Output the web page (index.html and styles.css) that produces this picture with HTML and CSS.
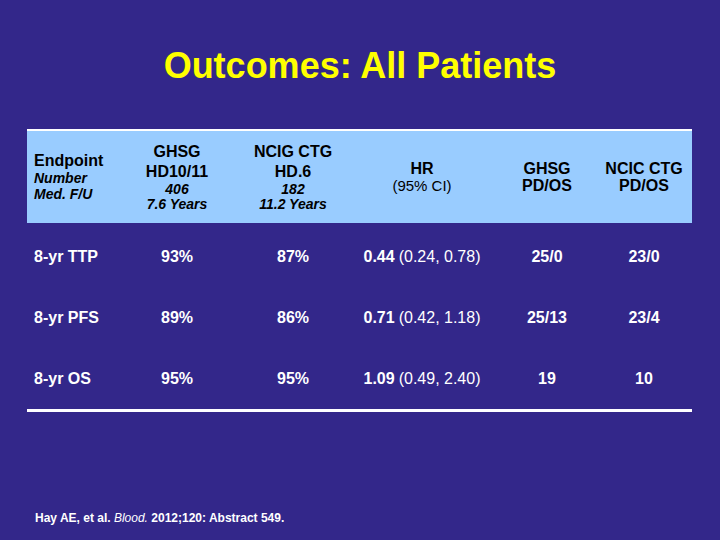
FILE: index.html
```html
<!DOCTYPE html>
<html lang="en">
<head>
<meta charset="utf-8">
<title>Outcomes: All Patients</title>
<link rel="stylesheet" href="styles.css">
</head>
<body>
<div class="slide">
  <h1 class="title">Outcomes: All Patients</h1>
  <div class="table">
    <div class="head">
      <div class="hcell first">
        <div class="hb">Endpoint</div>
        <div class="hi">Number</div>
        <div class="hi">Med. F/U</div>
      </div>
      <div class="hcell study">
        <div class="hb">GHSG</div>
        <div class="hb">HD10/11</div>
        <div class="hi">406</div>
        <div class="hi">7.6 Years</div>
      </div>
      <div class="hcell study">
        <div class="hb">NCIG CTG</div>
        <div class="hb">HD.6</div>
        <div class="hi">182</div>
        <div class="hi">11.2 Years</div>
      </div>
      <div class="hcell pair">
        <div class="hb">HR</div>
        <div class="hr">(95% CI)</div>
      </div>
      <div class="hcell pair">
        <div class="hb">GHSG</div>
        <div class="hb">PD/OS</div>
      </div>
      <div class="hcell pair">
        <div class="hb">NCIC CTG</div>
        <div class="hb">PD/OS</div>
      </div>
    </div>
    <div class="body">
      <div class="row">
        <div class="cell first">8-yr TTP</div>
        <div class="cell">93%</div>
        <div class="cell">87%</div>
        <div class="cell">0.44 <span class="ci">(0.24, 0.78)</span></div>
        <div class="cell">25/0</div>
        <div class="cell">23/0</div>
      </div>
      <div class="row">
        <div class="cell first">8-yr PFS</div>
        <div class="cell">89%</div>
        <div class="cell">86%</div>
        <div class="cell">0.71 <span class="ci">(0.42, 1.18)</span></div>
        <div class="cell">25/13</div>
        <div class="cell">23/4</div>
      </div>
      <div class="row">
        <div class="cell first">8-yr OS</div>
        <div class="cell">95%</div>
        <div class="cell">95%</div>
        <div class="cell">1.09 <span class="ci">(0.49, 2.40)</span></div>
        <div class="cell">19</div>
        <div class="cell">10</div>
      </div>
    </div>
  </div>
  <p class="ref">Hay AE, et al. <i>Blood.</i> 2012;120: Abstract 549.</p>
</div>
</body>
</html>
```

FILE: styles.css
```css
html, body {
  margin: 0;
  padding: 0;
}
body {
  width: 720px;
  height: 540px;
  background: #33278a;
  font-family: "Liberation Sans", Arial, sans-serif;
  overflow: hidden;
}
.slide {
  display: flex;
  flex-direction: column;
  height: 540px;
}
.title {
  margin: 45px 0 0;
  height: 41px;
  line-height: 41px;
  font-size: 36px;
  font-weight: bold;
  color: #ffff00;
  text-align: center;
}
.table {
  margin: 43px 0 0 27px;
  width: 665px;
}
.head,
.row {
  display: grid;
  grid-template-columns: 92px 116px 116px 142px 108px 86px;
  padding-right: 5px;
}
.head {
  border-top: 2px solid #ffffff;
  background: #99ccff;
  height: 92px;
  color: #000000;
}
.hcell {
  display: flex;
  flex-direction: column;
  justify-content: center;
  align-items: center;
  text-align: center;
}
.hcell.first {
  align-items: flex-start;
  padding-left: 7px;
  text-align: left;
}
.hb {
  font-size: 16px;
  font-weight: bold;
  line-height: 18px;
}
.hi {
  font-size: 14px;
  font-weight: bold;
  font-style: italic;
  line-height: 16px;
}
.hr {
  font-size: 15px;
  line-height: 17px;
}
.study .hb {
  line-height: 20px;
}
.study .hi {
  line-height: 15px;
}
.pair .hb {
  line-height: 17px;
}
.body {
  padding-top: 3px;
  border-bottom: 3px solid #ffffff;
}
.row {
  height: 61px;
  color: #ffffff;
  font-size: 16px;
  font-weight: bold;
}
.cell {
  display: flex;
  align-items: center;
  justify-content: center;
  white-space: nowrap;
}
.cell.first {
  justify-content: flex-start;
  padding-left: 7px;
}
.ci {
  font-weight: normal;
  margin-left: 4px;
}
.ref {
  margin: 99px 0 0 35px;
  font-size: 12px;
  font-weight: bold;
  color: #ffffff;
  line-height: 14px;
}
.ref i {
  font-weight: normal;
}
```
